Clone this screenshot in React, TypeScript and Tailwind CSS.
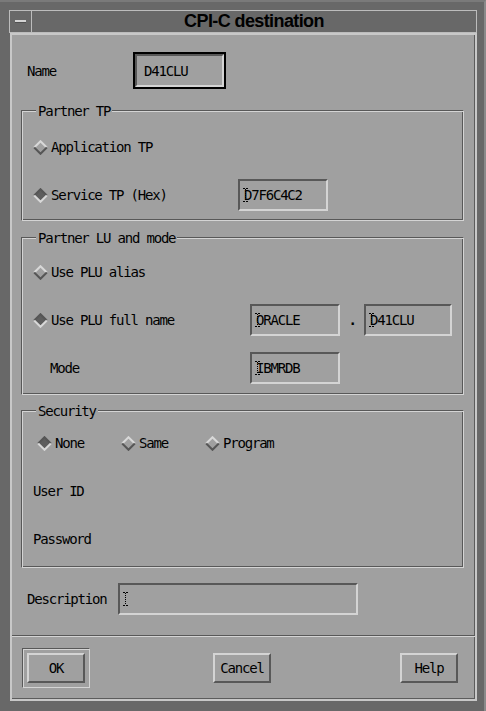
import React from "react";

const mono = "font-['DejaVu_Sans_Mono',monospace] text-[14px] tracking-[-1.2px] text-black leading-none";

function Diamond({ on }: { on?: boolean }) {
  const top = on ? "#565656" : "#d8d8d8";
  const bottom = on ? "#d8d8d8" : "#565656";
  return (
    <svg width="15" height="15" viewBox="0 0 15 15" className="shrink-0">
      <polygon points="7.5,1 14,7.5 7.5,14 1,7.5" fill={on ? "#5e5e5e" : "#a0a0a0"} />
      <polyline points="1.2,7.5 7.5,1.2 13.8,7.5" fill="none" stroke={top} strokeWidth="2" />
      <polyline points="1.2,7.5 7.5,13.8 13.8,7.5" fill="none" stroke={bottom} strokeWidth="2" />
    </svg>
  );
}

function Cursor() {
  return (
    <svg width="5" height="14" viewBox="0 0 5 14" className="shrink-0 mr-[-4px]">
      <path d="M0 0.5h2M3 0.5h2M0 13.5h2M3 13.5h2" stroke="#000" strokeWidth="1" />
      <path d="M2.5 1v12" stroke="#000" strokeWidth="1" strokeDasharray="1 1" />
    </svg>
  );
}

function Field({ w, value, cursor = true }: { w: string; value?: string; cursor?: boolean }) {
  return (
    <div
      className={`${w} h-[32px] border-2 border-t-[#585858] border-l-[#585858] border-b-[#d4d4d4] border-r-[#d4d4d4] bg-[#a0a0a0] flex items-center pl-[3px]`}
    >
      {cursor && <Cursor />}
      {value && <span className={mono}>{value}</span>}
    </div>
  );
}

function Radio({ label, on, className = "" }: { label: string; on?: boolean; className?: string }) {
  return (
    <div className={`flex items-center gap-[3px] ${className}`}>
      <Diamond on={on} />
      <span className={mono}>{label}</span>
    </div>
  );
}

function Group({ label, className = "", children }: { label: string; className?: string; children: React.ReactNode }) {
  return (
    <div
      className={`relative ml-[9px] w-[443px] border border-t-[#585858] border-l-[#585858] border-b-[#d4d4d4] border-r-[#d4d4d4] shadow-[inset_1px_1px_0_#d4d4d4,inset_-1px_-1px_0_#585858] ${className}`}
    >
      <span className={`absolute left-[14px] top-[-7px] bg-[#a0a0a0] px-[2px] ${mono}`}>{label}</span>
      {children}
    </div>
  );
}

function Button({ label }: { label: string }) {
  return (
    <div
      className={`w-[58px] h-[30px] border-2 border-t-[#d4d4d4] border-l-[#d4d4d4] border-b-[#585858] border-r-[#585858] flex items-center justify-center ${mono}`}
    >
      {label}
    </div>
  );
}

export default function App() {
  return (
    <div className="w-[486px] h-[711px] bg-[#686868] border-t-2 border-t-[#7a7a7a] border-r-2 border-r-[#8a8a8a] pt-[8px] pl-[9px] pr-[7px]">
      {/* Title bar */}
      <div className="h-[23px] border border-[#bcbcbc] flex">
        <div className="w-[22px] border-r border-[#bcbcbc] flex items-center justify-center">
          <div className="w-[11px] h-[3px] bg-[#d4d4d4] border-b border-[#505050]" />
        </div>
        <div className="flex-1 flex items-center justify-center font-['Liberation_Sans',sans-serif] font-bold text-[18px] tracking-[-0.6px] text-black">
          CPI-C destination
        </div>
      </div>

      {/* Panel */}
      <div className="ml-[1px] h-[668px] border-2 border-[#c8c8c8] shadow-[inset_-1px_-1px_0_#5c5c5c] bg-[#a0a0a0]">
        {/* Name */}
        <div className="flex items-center pl-[15px] mt-[17px]">
          <span className={`w-[106px] ${mono}`}>Name</span>
          <div className="w-[93px] h-[37px] border-2 border-black">
            <div className="h-full border-2 border-t-[#585858] border-l-[#585858] border-b-[#d4d4d4] border-r-[#d4d4d4] flex items-center pl-[7px]">
              <span className={mono}>D41CLU</span>
            </div>
          </div>
        </div>

        {/* Partner TP */}
        <Group label="Partner TP" className="mt-[21px] h-[111px] pt-[20px] pl-[11px]">
          <div className="h-[32px] flex items-center">
            <Radio label="Application TP" />
          </div>
          <div className="h-[32px] mt-[16px] flex items-center">
            <Radio label="Service TP (Hex)" on className="w-[205px]" />
            <Field w="w-[90px]" value="D7F6C4C2" />
          </div>
        </Group>

        {/* Partner LU and mode */}
        <Group label="Partner LU and mode" className="mt-[16px] h-[158px] pt-[18px] pl-[11px]">
          <div className="h-[32px] flex items-center">
            <Radio label="Use PLU alias" />
          </div>
          <div className="h-[32px] mt-[16px] flex items-center">
            <Radio label="Use PLU full name" on className="w-[217px]" />
            <Field w="w-[90px]" value="ORACLE" />
            <span className={`w-[24px] text-center font-bold ${mono}`}>.</span>
            <Field w="w-[88px]" value="D41CLU" />
          </div>
          <div className="h-[32px] mt-[16px] flex items-center">
            <span className={`w-[217px] pl-[17px] ${mono}`}>Mode</span>
            <Field w="w-[90px]" value="IBMRDB" />
          </div>
        </Group>

        {/* Security */}
        <Group label="Security" className="mt-[15px] h-[158px] pt-[16px] pl-[11px]">
          <div className="h-[32px] flex items-center pl-[4px]">
            <Radio label="None" on className="w-[84px]" />
            <Radio label="Same" className="w-[84px]" />
            <Radio label="Program" />
          </div>
          <div className="h-[32px] mt-[16px] flex items-center">
            <span className={mono}>User ID</span>
          </div>
          <div className="h-[32px] mt-[16px] flex items-center">
            <span className={mono}>Password</span>
          </div>
        </Group>

        {/* Description */}
        <div className="flex items-center pl-[15px] mt-[15px]">
          <span className={`w-[91px] ${mono}`}>Description</span>
          <Field w="w-[240px]" />
        </div>

        {/* Separator */}
        <div className="mt-[20px] border-t border-b border-t-[#585858] border-b-[#d4d4d4]" />

        {/* Buttons */}
        <div className="flex items-center pl-[10px] mt-[11px]">
          <div className="p-[4px] border border-t-[#585858] border-l-[#585858] border-b-[#d4d4d4] border-r-[#d4d4d4] shadow-[inset_1px_1px_0_#d4d4d4]">
            <Button label="OK" />
          </div>
          <div className="ml-[123px]">
            <Button label="Cancel" />
          </div>
          <div className="ml-[129px]">
            <Button label="Help" />
          </div>
        </div>
      </div>
    </div>
  );
}
